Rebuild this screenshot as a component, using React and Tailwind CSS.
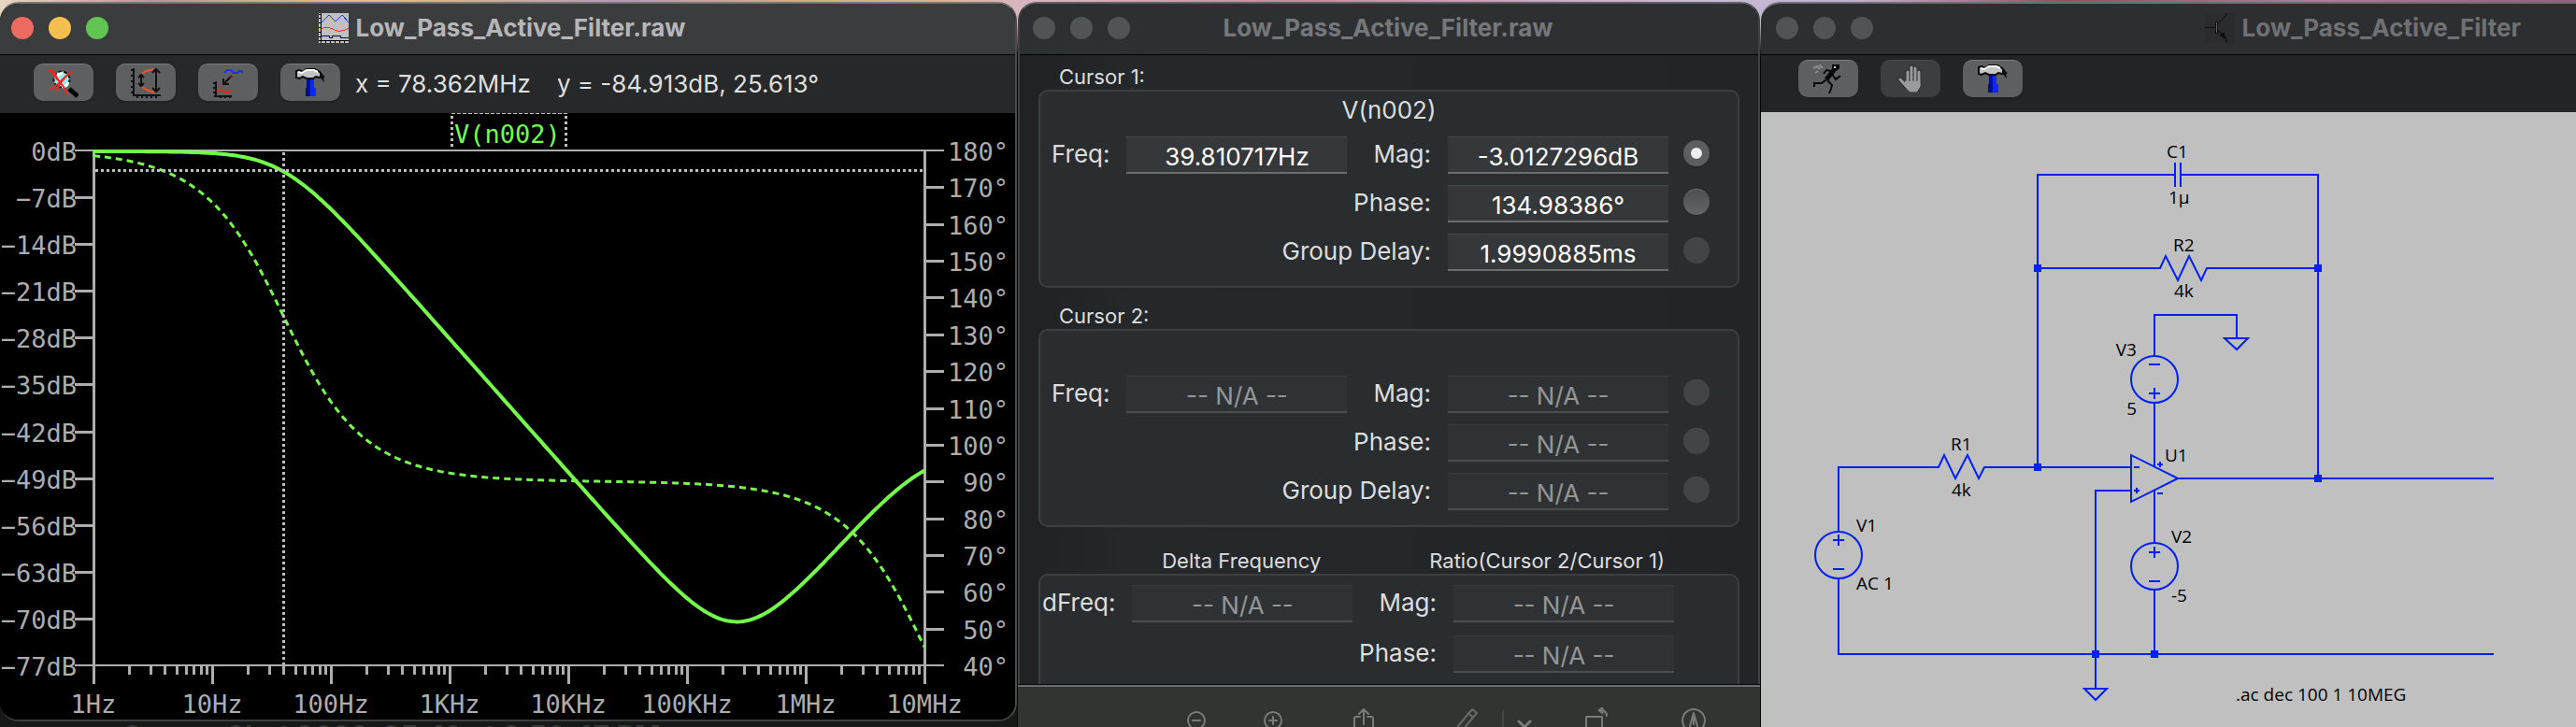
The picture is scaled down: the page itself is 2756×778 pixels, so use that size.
import React from "react";

const PLOT = { left: 100, right: 989, top: 161, bottom: 712 };
const DECADE = (PLOT.right - PLOT.left) / 7;
const HEIGHT = PLOT.bottom - PLOT.top;

const LEFT_LABELS = ["0dB", "−7dB", "−14dB", "−21dB", "−28dB", "−35dB", "−42dB", "−49dB", "−56dB", "−63dB", "−70dB", "−77dB"];
const RIGHT_LABELS = ["180°", "170°", "160°", "150°", "140°", "130°", "120°", "110°", "100°", "90°", "80°", "70°", "60°", "50°", "40°"];
const X_LABELS = ["1Hz", "10Hz", "100Hz", "1KHz", "10KHz", "100KHz", "1MHz", "10MHz"];

const POLE = 39.81;
const ZERO = 262000;
const GBW = 1e7;

function magnitude(f) {
  const rolloff = -10 * Math.log10(1 + (f / POLE) ** 2);
  const rise = 20 * Math.log10(1 + (f / ZERO) ** 2);
  const limit = -10 * Math.log10(1 + (f / GBW) ** 2);
  return rolloff + rise + limit;
}

function phase(f) {
  return 180 - ((Math.atan(f / POLE) + Math.atan(f / GBW)) * 180) / Math.PI;
}

function trace(toY) {
  const points = [];
  for (let i = 0; i <= 280; i++) {
    const decade = i / 40;
    points.push(`${(PLOT.left + decade * DECADE).toFixed(1)},${toY(10 ** decade).toFixed(1)}`);
  }
  return points.join(" ");
}

const MAG_POINTS = trace((f) => PLOT.top + 1 + (-magnitude(f) / 77) * HEIGHT);
const PHASE_POINTS = trace((f) => PLOT.top + ((180 - phase(f)) / 140) * HEIGHT);

function TrafficLights({ active }) {
  const dim = "size-6 rounded-full bg-[#515356]";
  return (
    <div className="flex shrink-0 gap-4">
      <button type="button" aria-label="Close" className={active ? "size-6 rounded-full bg-[#ed6a5f]" : dim} />
      <button type="button" aria-label="Minimize" className={active ? "size-6 rounded-full bg-[#f5bf4f]" : dim} />
      <button type="button" aria-label="Zoom" className={active ? "size-6 rounded-full bg-[#61c554]" : dim} />
    </div>
  );
}

function ToolButton({ label, disabled, children }) {
  return (
    <button
      type="button"
      aria-label={label}
      disabled={disabled}
      className={
        disabled
          ? "flex h-10 w-16 shrink-0 items-center justify-center rounded-[10px] border-t border-[#48494c] bg-[#3d3e41]"
          : "flex h-10 w-16 shrink-0 items-center justify-center rounded-[10px] border-t border-[#7b7c7e] bg-[#5e5f61] shadow-sm"
      }
    >
      {children}
    </button>
  );
}

function WaveformIcon() {
  return (
    <svg viewBox="0 0 32 32" className="size-8 shrink-0" shapeRendering="crispEdges" aria-hidden="true">
      <rect width="32" height="32" fill="#c0c0c0" />
      <path d="M2.5 0v32M0 29.5h32M0 1h2M0 5h2M0 10h2M0 15h2M0 20h2M0 25h2M7 30v2M12 30v2M17 30v2M22 30v2M27 30v2" stroke="#000" fill="none" />
      <path d="M3 10l8-8 7 7 7-7 7 8" stroke="#1c3cff" fill="none" />
      <path d="M3 17q4-3 9-1l8 3q6 1 12-3" stroke="#ee3322" fill="none" />
      <path d="M3 24.500h8v2h3v-2h9v2h9" stroke="#00008b" fill="none" />
    </svg>
  );
}

function MagnifierIcon() {
  return (
    <svg viewBox="0 0 32 32" className="size-8" aria-hidden="true">
      <path d="M22 22l9 8" stroke="#000" strokeWidth="5" />
      <circle cx="14" cy="12" r="8.500" fill="#9fe9ee" stroke="#151515" strokeWidth="2" strokeDasharray="4 2" />
      <path d="M9 9q2-4 6-3M14 20q6 0 7-5" stroke="#e8ffff" strokeWidth="3" fill="none" />
      <path d="M0 3l5 0 5 9 6 8 4 8M1 1l9 12M25 4l-7 5-8 8-9 6M20 7l-6 7-7 11" stroke="#ee2a1c" strokeWidth="2" fill="none" />
    </svg>
  );
}

function AutorangeIcon() {
  return (
    <svg viewBox="0 0 32 32" className="size-8" fill="none" stroke="#111" strokeWidth="2" aria-hidden="true">
      <path d="M3 0v29M2 29h30M0 2h3M0 8h3M0 14h3M0 20h3M0 26h3M7 29v3M12 29v3M17 29v3M22 29v3M27 29v3" />
      <path d="M11 7v12M8 10l3-3 3 3M8 16l3 3 3-3" />
      <path d="M27 1v24M23 5l4-4 4 4M23 21l4 4 4-4" />
      <path d="M12 6l4-3 8-2M12 20l5 3 8 3" stroke="#f0502c" />
    </svg>
  );
}

function AddTraceIcon() {
  return (
    <svg viewBox="0 0 32 32" className="size-8" fill="none" stroke="#111" strokeWidth="2" aria-hidden="true">
      <path d="M3 14v16M1 30h19M0 16h3M0 21h3M0 26h3M8 29v3M13 29v3M18 29v3" />
      <path d="M20 8l-9 9M11 11v6h6" />
      <path d="M18 10l2-2" stroke="#7c1c14" />
      <path d="M4 25l3-2h3l3 3h3l4-3" stroke="#e8281c" />
      <path d="M12 5l3-3h4l3 3h4l2-2h2l2 2" stroke="#1c30ee" />
    </svg>
  );
}

function HammerIcon() {
  return (
    <svg viewBox="0 0 32 32" className="size-8" aria-hidden="true">
      <path d="M12 10h5v20h-6v-9h1z" fill="#00108c" />
      <path d="M16 10h4v11h2v9h-6z" fill="#0a28ff" />
      <path d="M1 3l3-1 4 2 4-3h9l5 3 4 5-4 1-4-1-3 2h-7l-4-2-4 2-3-1z" fill="#c4c4c4" stroke="#080808" strokeWidth="2" />
      <path d="M3 4l4 1 5-3h8l4 2" stroke="#fff" strokeWidth="2" fill="none" />
      <path d="M26 4l4 4 1 7-2-2-3-4z" fill="#111" />
    </svg>
  );
}

function RunnerIcon() {
  return (
    <svg viewBox="0 0 32 32" className="size-8" fill="none" aria-hidden="true">
      <path d="M0 4l4-2 3 3M2 9l3-2M6 0l4 4" stroke="#8c8d8f" strokeWidth="2" />
      <path d="M20 0h8v4l-3 3h-4l-1-2z" fill="#080808" />
      <rect x="22" y="2" width="2" height="2" fill="#ddd" />
      <path d="M22 6l-8 10" stroke="#080808" strokeWidth="5" />
      <path d="M19 7l-5-1-3 4M20 10l4 6 5-4M14 16l-5 4H1v4M15 17l5 5-1 4-2 5" stroke="#080808" strokeWidth="2" />
    </svg>
  );
}

function HandIcon() {
  return (
    <svg viewBox="0 0 32 32" className="size-8" fill="none" strokeLinecap="round" aria-hidden="true">
      <path d="M13 18V8M17 18V3M21 18V4M25 20V8M5 16l7 8" stroke="#2d2e30" strokeWidth="5" />
      <path d="M10 17h17v7l-4 6h-8l-6-7z" fill="#9a9b9d" stroke="#2d2e30" />
      <path d="M13 20V8M17 20V3M21 20V4M25 22V8M5 16l8 9" stroke="#9a9b9d" strokeWidth="3" />
      <path d="M15 18V7M19 18V5M23 18V8" stroke="#5c5d60" strokeLinecap="butt" />
    </svg>
  );
}

function TransistorIcon() {
  return (
    <svg viewBox="0 0 32 32" className="size-8 shrink-0" fill="none" stroke="#0d0d0e" aria-hidden="true">
      <rect width="32" height="32" fill="#2b2b2d" stroke="none" />
      <path d="M0 15.500h12M14 11l9-9V0M14 19l9 9v4" />
      <rect x="11.500" y="9.500" width="2" height="12" fill="#666" />
      <path d="M22 27l-6-3 4-3z" fill="#0d0d0e" />
    </svg>
  );
}

function BodePlot() {
  const minorTicks = [];
  for (let d = 0; d < 7; d++) {
    for (let m = 2; m < 10; m++) {
      minorTicks.push(Math.round(PLOT.left + (d + Math.log10(m)) * DECADE));
    }
  }
  return (
    <svg viewBox="0 121 1086 649" className="block h-auto w-full bg-black" role="img" aria-label="Magnitude and phase of V(n002)">
      <g stroke="#adadad" fill="none" shapeRendering="crispEdges">
        <path d="M80 161H1010M80 712H1010" strokeWidth="2" />
        <path d="M100.500 160V732M989.500 160V732" strokeWidth="3" />
        {LEFT_LABELS.slice(1, -1).map((label, i) => (
          <path key={label} d={`M80 ${Math.round(PLOT.top + ((i + 1) * HEIGHT) / 11) + 0.5}H100`} strokeWidth="3" />
        ))}
        {RIGHT_LABELS.slice(1, -1).map((label, i) => (
          <path key={label} d={`M990 ${Math.round(PLOT.top + ((i + 1) * HEIGHT) / 14) + 0.5}H1010`} strokeWidth="3" />
        ))}
        {minorTicks.map((x) => (
          <path key={x} d={`M${x + 0.5} 712V722`} strokeWidth="3" />
        ))}
        {X_LABELS.slice(1, -1).map((label, i) => (
          <path key={label} d={`M${Math.round(PLOT.left + (i + 1) * DECADE) + 0.5} 712V732`} strokeWidth="3" />
        ))}
      </g>
      <g fill="#adadad" className="font-['DejaVu_Sans_Mono',monospace] text-[27px]">
        {LEFT_LABELS.map((label, i) => (
          <text key={label} x="82" y={PLOT.top + 11 + Math.round((i * HEIGHT) / 11)} textAnchor="end">{label}</text>
        ))}
        {RIGHT_LABELS.map((label, i) => (
          <text key={label} x="1079" y={PLOT.top + 11 + Math.round((i * HEIGHT) / 14)} textAnchor="end">{label}</text>
        ))}
        {X_LABELS.map((label, i) => (
          <text key={label} x={Math.round(PLOT.left + i * DECADE)} y="763" textAnchor="middle">{label}</text>
        ))}
      </g>
      <g fill="none" stroke="#75fb4c">
        <polyline points={MAG_POINTS} strokeWidth="4" />
        <polyline points={PHASE_POINTS} strokeWidth="3" strokeDasharray="7 5" />
      </g>
      <g stroke="#bdbdbd" fill="none" strokeWidth="3" strokeDasharray="3 3" shapeRendering="crispEdges">
        <path d="M102 182.500H988M303.500 163V711" />
        <path d="M483.500 124V158M605.500 124V158" />
        <path d="M483 121.500H607" strokeWidth="1" strokeDasharray="4 2" />
      </g>
      <text x="486" y="153" fill="#75fb4c" className="font-['DejaVu_Sans_Mono',monospace] text-[27px]">V(n002)</text>
    </svg>
  );
}

function PlotWindow() {
  return (
    <section className="overflow-hidden rounded-[20px] border-t-2 border-r-2 border-b-2 border-t-[#747873] border-r-[#4a4b4c] border-b-[#3c3d3d] bg-black">
      <header className="flex h-[55px] items-center border-b border-black bg-[#3b3c3e] px-3 pb-0.5">
        <TrafficLights active />
        <h1 className="flex flex-1 items-center justify-center gap-2 pr-[116px] text-[26px] leading-8 font-bold text-[#b6b6b8]">
          <WaveformIcon />
          Low_Pass_Active_Filter.raw
        </h1>
      </header>
      <div className="flex h-[62px] items-start gap-6 bg-[#27282a] px-9 pt-[9px]">
        <ToolButton label="Cancel zoom"><MagnifierIcon /></ToolButton>
        <ToolButton label="Autorange"><AutorangeIcon /></ToolButton>
        <ToolButton label="Add trace"><AddTraceIcon /></ToolButton>
        <div className="flex items-start gap-4">
          <ToolButton label="Control panel"><HammerIcon /></ToolButton>
          <p className="flex gap-7 text-[26px] leading-[44px] whitespace-nowrap text-[#dedfdf]">
            <span>x = 78.362MHz</span>
            <span>y = -84.913dB, 25.613°</span>
          </p>
        </div>
      </div>
      <BodePlot />
    </section>
  );
}

function Readout({ id, label, value, first }) {
  const empty = !value;
  return (
    <>
      <label htmlFor={id} className={first ? "pb-[3px] leading-9 whitespace-nowrap" : "ml-2.5 pb-[3px] leading-9 whitespace-nowrap"}>{label}</label>
      <input
        id={id}
        type="text"
        readOnly
        value={value || "-- N/A --"}
        className={
          empty
            ? "h-10 w-[236px] min-w-0 border-t border-b-2 border-t-[#393b3d] border-b-[#4b4d4f] bg-[#2f3235] pt-1 text-center text-[#949595] outline-none"
            : "h-10 w-[236px] min-w-0 border-t border-b-2 border-t-[#47494b] border-b-[#6a6c6e] bg-[#35383b] pt-1 text-center text-white outline-none"
        }
      />
    </>
  );
}

function Radio({ name, label, checked, bright }) {
  return (
    <span className="-ml-0.5 flex h-8 w-7 shrink-0 items-start">
      <input
        type="radio"
        name={name}
        aria-label={label}
        defaultChecked={checked}
        className={
          bright
            ? "size-7 shrink-0 appearance-none rounded-full border-t border-[#6c6d6f] bg-linear-to-b from-[#4d4f51] to-[#636567] shadow-sm checked:border-8 checked:border-[#5c5e60] checked:bg-[#eeeeee] checked:bg-none"
            : "size-7 shrink-0 appearance-none rounded-full border-t border-[#4a4c4e] bg-[#424447]"
        }
      />
    </span>
  );
}

const panel = "rounded-[10px] border-2 border-[#3c3f41] bg-[#2a2d30]";

function CursorGroup({ title, prefix, net, freq, mag, phaseValue, delay }) {
  return (
    <section aria-label={title}>
      <h2 className="pl-[22px] text-[22px] leading-7">{title}</h2>
      <div className={`${panel} h-[212px] pr-[30px]`}>
        <p className="-mr-[30px] mb-2 h-10 text-center leading-10">{net}</p>
        <div className="flex flex-col gap-3">
          <div className="flex items-center justify-end gap-[18px]">
            <Readout first id={`${prefix}-freq`} label="Freq:" value={freq} />
            <Readout id={`${prefix}-mag`} label="Mag:" value={mag} />
            <Radio name={prefix} label={`${title} magnitude`} checked={Boolean(net)} bright={Boolean(net)} />
          </div>
          <div className="flex items-center justify-end gap-[18px]">
            <Readout id={`${prefix}-phase`} label="Phase:" value={phaseValue} />
            <Radio name={prefix} label={`${title} phase`} bright={Boolean(net)} />
          </div>
          <div className="flex items-center justify-end gap-[18px]">
            <Readout id={`${prefix}-delay`} label="Group Delay:" value={delay} />
            <Radio name={prefix} label={`${title} group delay`} />
          </div>
        </div>
      </div>
    </section>
  );
}

function CursorWindow() {
  return (
    <section className="flex h-[730px] flex-col overflow-hidden rounded-t-[20px] border-x-2 border-t-2 border-x-[#3f4143] border-t-[#5d605f] bg-linear-to-r from-[#1f2123] via-[#25282b] via-15% to-[#222427] text-[26px] text-[#dcdddd]">
      <header className="flex h-[55px] shrink-0 items-center border-b border-black bg-[#2d3033] px-3.5 pb-0.5">
        <TrafficLights />
        <h1 className="flex-1 pr-[106px] text-center text-[26px] leading-8 font-bold text-[#75777a]">Low_Pass_Active_Filter.raw</h1>
      </header>
      <div className="flex flex-1 flex-col px-5 pt-[9px]">
        <CursorGroup title="Cursor 1:" prefix="c1" net="V(n002)" freq="39.810717Hz" mag="-3.0127296dB" phaseValue="134.98386°" delay="1.9990885ms" />
        <div className="mt-4">
          <CursorGroup title="Cursor 2:" prefix="c2" />
        </div>
        <div className="mt-[22px] flex justify-end gap-[116px] pr-20 text-[22px] leading-7 whitespace-nowrap">
          <h2>Delta Frequency</h2>
          <h2>Ratio(Cursor 2/Cursor 1)</h2>
        </div>
        <div className="flex flex-1 flex-col gap-3.5 rounded-t-[10px] border-x-2 border-t-2 border-[#3c3f41] bg-[#2a2d30] pt-2.5 pr-[68px]">
          <div className="flex items-center justify-end gap-[18px]">
            <Readout first id="d-freq" label="dFreq:" />
            <Readout id="d-mag" label="Mag:" />
          </div>
          <div className="flex items-center justify-end gap-[18px]">
            <Readout id="d-phase" label="Phase:" />
          </div>
        </div>
      </div>
    </section>
  );
}

function BarButton({ label, children }) {
  return (
    <button type="button" aria-label={label} className="size-7 shrink-0">
      <svg viewBox="0 0 28 28" className="size-7" fill="none" stroke="#797a79" strokeWidth="2" strokeLinecap="round" strokeLinejoin="round" aria-hidden="true">
        {children}
      </svg>
    </button>
  );
}

function PreviewToolbar() {
  return (
    <div className="mt-px flex flex-1 items-start overflow-hidden border-t-2 border-[#6c6e6c] bg-[#323432] pt-[22px] pl-[177px]">
      <div className="flex gap-[54px]">
        <BarButton label="Zoom out">
          <circle cx="14" cy="14" r="9" />
          <path d="M10 14h8M21 21l5 5" />
        </BarButton>
        <BarButton label="Zoom in">
          <circle cx="14" cy="14" r="9" />
          <path d="M10 14h8M14 10v8M21 21l5 5" />
        </BarButton>
      </div>
      <div className="ml-[69px]">
        <BarButton label="Share">
          <path d="M14 18V2M9 7l5-5 5 5M10 10H6q-2 0-2 2v14M18 10h4q2 0 2 2v14" />
        </BarButton>
      </div>
      <div className="ml-[82px] flex items-start opacity-75">
        <BarButton label="Markup">
          <path d="M5 20L20 2l5 4-15 18-6 2zM16 6l5 5" />
        </BarButton>
        <span className="mt-1 ml-6 h-8 w-0.5 bg-[#4c4e4c]" />
      </div>
      <div className="ml-2">
        <BarButton label="Markup options">
          <path d="M8 15l6 6 6-6" strokeWidth="3" />
        </BarButton>
      </div>
      <div className="ml-[47px]">
        <BarButton label="Rotate">
          <path d="M5 26V10h17v16M27 9q0-6-8-6" />
          <path d="M18 3l5-4v8z" fill="#797a79" strokeWidth="1" />
        </BarButton>
      </div>
      <div className="ml-[78px]">
        <BarButton label="Highlight">
          <circle cx="14" cy="14" r="12" />
          <path d="M14 6l-4 14M14 6l4 14M14 8v10" />
        </BarButton>
      </div>
    </div>
  );
}

const LABELS = [
  [2318, 169, "C1"],
  [2320, 218, "1µ"],
  [2325, 269, "R2"],
  [2326, 318, "4k"],
  [2087, 482, "R1"],
  [2088, 531, "4k"],
  [1986, 569, "V1"],
  [1986, 631, "AC 1"],
  [2316, 494, "U1"],
  [2323, 581, "V2"],
  [2323, 644, "-5"],
  [2392, 750, ".ac dec 100 1 10MEG"],
];

const JUNCTIONS = [
  [2180, 287],
  [2480, 287],
  [2180, 500],
  [2480, 512],
  [2242, 700],
  [2305, 700],
];

function Schematic() {
  return (
    <svg viewBox="1884 120 872 658" className="block h-auto w-full bg-[#c0c0c0]" role="img" aria-label="Low pass active filter schematic">
      <g fill="none" stroke="#0020f5" strokeWidth="2">
        <path d="M2180 500V187H2327M2333 187H2480V512M2327 174V200M2333 174V200" />
        <path d="M2180 287H2311L2317 274L2330 300L2342 274L2355 300L2361 287H2480" />
        <path d="M2305 381V337H2393V362M2380 362H2405L2393 374Z" />
        <circle cx="2305" cy="406" r="25" />
        <path d="M2299 390H2311M2299 421H2311M2305 415V427M2305 431V500" />
        <path d="M1967 569V500H2074L2080 487L2092 512L2105 487L2117 512L2123 500H2280" />
        <path d="M2280 487V537L2330 512ZM2330 512H2668" />
        <path d="M2283 500H2289M2283 525H2289M2286 522V528M2308 497H2314M2311 494V500M2308 528H2314" />
        <path d="M2280 525H2242V737M2230 737H2254L2242 749Z" />
        <path d="M2305 525V581M2305 631V700M2299 591H2311M2305 585V597M2299 622H2311" />
        <circle cx="2305" cy="606" r="25" />
        <circle cx="1967" cy="594" r="25" />
        <path d="M1961 578H1973M1967 572V584M1961 609H1973M1967 619V700H2668" />
      </g>
      <g fill="#0020f5">
        {JUNCTIONS.map(([x, y]) => (
          <rect key={`${x}-${y}`} x={x - 4} y={y - 4} width="8" height="8" />
        ))}
      </g>
      <g fill="#000" className="font-['Open_Sans',sans-serif] text-[19px]">
        {LABELS.map(([x, y, text]) => (
          <text key={`${x}-${y}`} x={x} y={y}>{text}</text>
        ))}
        <text x="2286" y="381" textAnchor="end">V3</text>
        <text x="2286" y="444" textAnchor="end">5</text>
      </g>
    </svg>
  );
}

function SchematicWindow() {
  return (
    <section className="flex-1 overflow-hidden rounded-tl-[20px] border-t-2 border-[#6d716d] bg-[#c0c0c0]">
      <header className="flex h-[55px] items-center border-b border-black bg-[#2d2e31] pr-[59px] pb-0.5 pl-4">
        <TrafficLights />
        <h1 className="ml-auto flex items-center gap-2 text-[26px] leading-8 font-bold text-[#707173]">
          <TransistorIcon />
          Low_Pass_Active_Filter
        </h1>
      </header>
      <div className="flex h-[61px] items-start gap-6 bg-[#232427] px-10 pt-[5px]">
        <ToolButton label="Run"><RunnerIcon /></ToolButton>
        <ToolButton label="Halt" disabled><HandIcon /></ToolButton>
        <ToolButton label="Control panel"><HammerIcon /></ToolButton>
      </div>
      <Schematic />
    </section>
  );
}

export default function App() {
  return (
    <main className="grid h-screen grid-cols-[1088fr_796fr_872fr] overflow-hidden bg-[linear-gradient(to_right,#e6d6c0,#c98f9c_6%,#e3c07a_14%,#b79ab8_24%,#e0b070_34%,#d7b6c4_40%,#c98aa0_50%,#c9bbd6_66%,#bfb2d0_72%,#a04a62_80%,#b07a9a_90%,#94607c)] font-['Inter',sans-serif]">
      <div className="flex min-w-0 flex-col bg-[linear-gradient(to_bottom,transparent_24px,#171918_60px)] pt-0.5">
        <PlotWindow />
        <div className="min-h-0 flex-1 overflow-hidden pl-[132px] text-[30px] leading-[30px] font-bold whitespace-nowrap text-[#363838]">
          Screen Shot 2022-05-10 at 8.50.47 PM
        </div>
      </div>
      <div className="flex min-w-0 flex-col bg-[linear-gradient(to_bottom,transparent_24px,#050505_60px)] px-px pt-0.5">
        <CursorWindow />
        <PreviewToolbar />
      </div>
      <div className="flex min-w-0 flex-col pt-0.5">
        <SchematicWindow />
      </div>
    </main>
  );
}
